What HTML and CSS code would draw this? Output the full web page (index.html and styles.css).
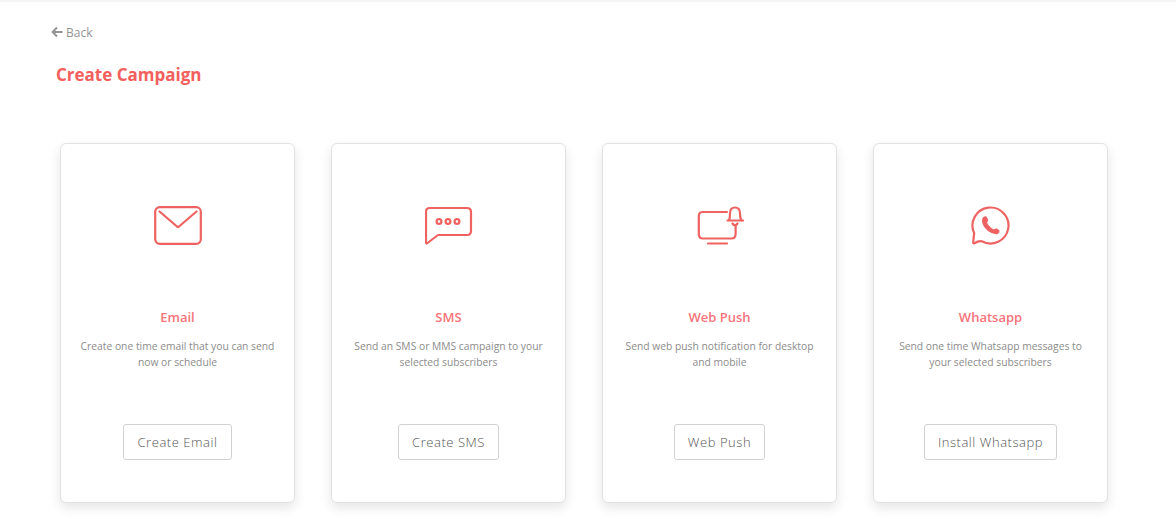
FILE: index.html
```html
<html>
  <head>
    <link rel="stylesheet" href="styles.css">
  </head>
  <body>
    <div class="topline"></div>
    <a class="backlink">
      <svg class="backicon" viewBox="0 0 12 12" width="12" height="12">
        <path d="M6 1.5 L1.7 6 L6 10.5 M2 6 H11.5" fill="none" stroke="#949494" stroke-width="2"/>
      </svg>
      Back
    </a>
    <h1 class="pagetitle">Create Campaign</h1>

    <div class="cardrow">
      <div class="card">
        <svg class="cardicon" viewBox="0 0 48 40" width="48" height="40">
          <rect x="1.2" y="1.2" width="45.6" height="36.6" rx="4.5" class="line"/>
          <path d="M5.5 5.5 L23 20.5 Q24 21.2 25 20.5 L42.5 5.5" class="line"/>
        </svg>
        <h2 class="cardtitle">Email</h2>
        <p class="cardtext">Create one time email that you can send now or schedule</p>
        <button class="cardbutton">Create Email</button>
      </div>

      <div class="card">
        <svg class="cardicon" viewBox="0 0 48 40" width="48" height="40">
          <path d="M4.5 2 H42 Q46 2 46 6 V25 Q46 29 42 29 H13 L2.5 37 Q1 38 1 35.5 V6 Q1 2 4.5 2 Z" class="line"/>
          <circle cx="14" cy="15.5" r="2.4" class="line"/>
          <circle cx="23" cy="15.5" r="2.4" class="line"/>
          <circle cx="32" cy="15.5" r="2.4" class="line"/>
        </svg>
        <h2 class="cardtitle">SMS</h2>
        <p class="cardtext">Send an SMS or MMS campaign to your selected subscribers</p>
        <button class="cardbutton">Create SMS</button>
      </div>

      <div class="card">
        <svg class="cardicon" viewBox="0 0 48 40" width="48" height="40">
          <path d="M31 6 H7 Q2.8 6 2.8 10.2 V28 Q2.8 32.5 7 32.5 H35.5 Q39.6 32.5 39.6 28 V20" class="line"/>
          <path d="M12 37.5 H31" class="line"/>
          <path d="M31.5 14.5 H47 M33 14.5 Q34 12.5 34 7.5 Q34 1.5 39 1.5 Q44 1.5 44 7.5 Q44 12.5 45.5 14.5" class="line"/>
          <path d="M36.5 17.5 Q39 21 41.5 17.5" class="line"/>
        </svg>
        <h2 class="cardtitle">Web Push</h2>
        <p class="cardtext">Send web push notification for desktop and mobile</p>
        <button class="cardbutton">Web Push</button>
      </div>

      <div class="card">
        <svg class="cardicon" viewBox="0 0 48 40" width="48" height="40">
          <path d="M7.2 27.2 A18 18 0 1 1 14.8 35.3 Q11 34.8 8 37 Q6 38 6.2 36 Z" class="line"/>
          <path d="M16 11.5 Q18 9.5 19.5 10.5 L21 13.5 Q21.5 15 20 16.5 Q22 21 27 23.5 Q28.5 22 30 22.5 L32.5 24.5 Q33 26.5 30.5 28 Q26.5 29 21 25 Q15 20 15 14.5 Q15 12.5 16 11.5 Z" class="fill"/>
        </svg>
        <h2 class="cardtitle">Whatsapp</h2>
        <p class="cardtext">Send one time Whatsapp messages to your selected subscribers</p>
        <button class="cardbutton">Install Whatsapp</button>
      </div>
    </div>
  </body>
</html>
```

FILE: styles.css
```css
body {
  margin: 0;
  height: 519px;
  overflow: hidden;
  background-color: #ffffff;
  font-family: "Open Sans", sans-serif;
}

.topline {
  height: 2px;
  background-color: #f4f4f4;
}

.backlink {
  display: flex;
  align-items: center;
  gap: 3px;
  margin: 21px 0 0 51px;
  height: 18px;
  font-size: 12px;
  color: #949494;
}

.pagetitle {
  margin: 22px 0 0 56px;
  font-size: 17px;
  line-height: 24px;
  font-weight: 700;
  color: #f25f5c;
}

.cardrow {
  display: flex;
  gap: 36px;
  margin: 56px 0 0 60px;
}

.card {
  box-sizing: border-box;
  width: 235px;
  height: 360px;
  padding-top: 62px;
  display: flex;
  flex-direction: column;
  align-items: center;
  background-color: #ffffff;
  border: 1px solid #e2e2e2;
  border-radius: 6px;
  box-shadow: 0 5px 12px rgba(0, 0, 0, 0.1);
}

.cardicon {
  display: block;
}

.line {
  fill: none;
  stroke: #ee6361;
  stroke-width: 2.2;
  stroke-linecap: round;
  stroke-linejoin: round;
}

.fill {
  fill: #ee6361;
}

.cardtitle {
  margin: 61px 0 0;
  font-size: 13px;
  line-height: 20px;
  font-weight: 600;
  color: #f7747a;
}

.cardtext {
  margin: 11px 0 0;
  width: 205px;
  height: 62px;
  font-size: 10.3px;
  line-height: 16px;
  text-align: center;
  color: #8c8c8c;
}

.cardbutton {
  margin-top: 24px;
  height: 36px;
  padding: 0 13px;
  background-color: #ffffff;
  border: 1px solid #d2d2d2;
  border-radius: 3px;
  font-family: "Open Sans", sans-serif;
  font-size: 13px;
  font-weight: 300;
  letter-spacing: 0.55px;
  color: #555555;
}
```
